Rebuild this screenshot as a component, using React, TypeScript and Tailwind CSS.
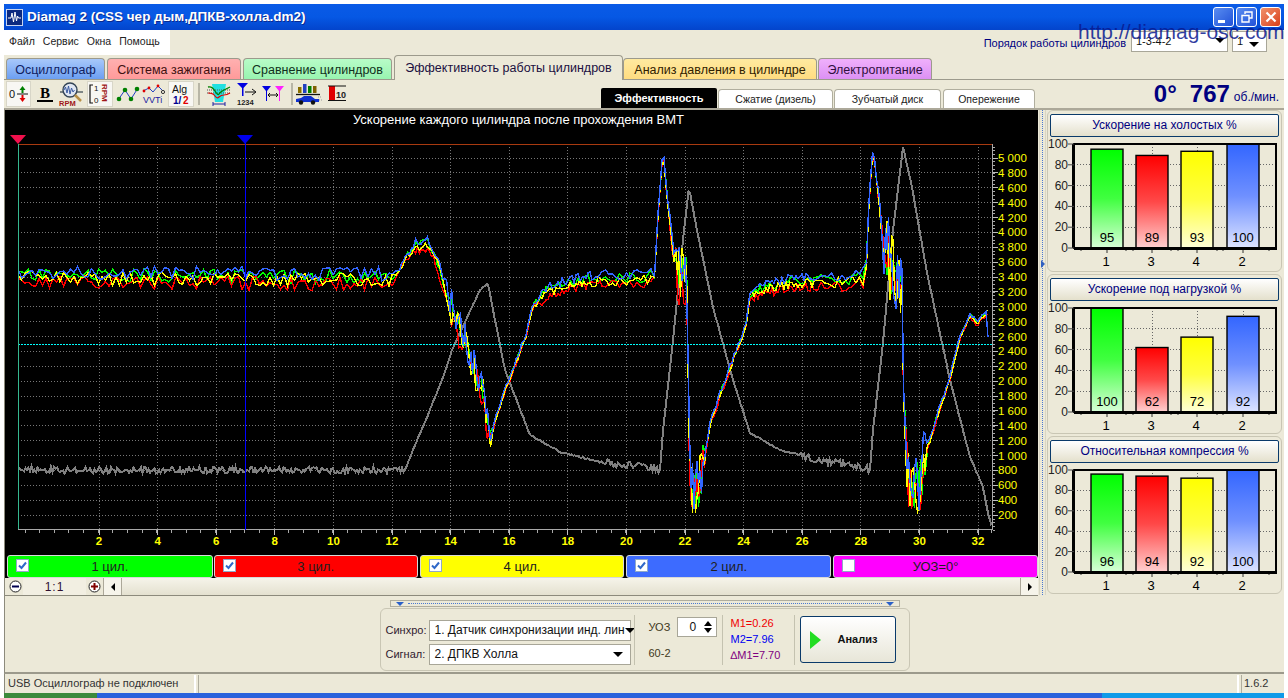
import React from "react";

type Pt = [number, number];

// hand-read control points of the waveform, in page pixels
const SIGNAL: Pt[] = [
  [18, 276], [395, 278], [405, 258], [415, 246], [428, 243], [436, 258], [446, 290], [456, 322], [466, 345],
  [476, 375], [484, 395], [490, 440], [494, 425], [503, 395], [515, 365], [526, 335], [532, 308], [545, 292],
  [570, 283], [600, 279], [640, 279], [655, 276], [658, 215], [663, 150], [668, 205], [674, 258], [680, 272],
  [687, 272], [688.5, 400], [690, 480], [696, 495], [702, 470], [710, 425], [720, 395], [732, 362], [746, 325],
  [750, 295], [765, 287], [800, 281], [850, 280], [866, 276], [869, 200], [873, 150], [878, 190], [884, 245],
  [893, 270], [902, 285], [904, 420], [908, 480], [918, 490], [925, 455], [937, 417], [950, 377], [960, 337],
  [970, 315], [977, 323], [982, 317], [987, 313],
];
const AMP: Pt[] = [
  [18, 7], [395, 7], [400, 3], [430, 4], [445, 6], [450, 16], [488, 16], [492, 2], [530, 2], [545, 4], [655, 6],
  [657, 2], [674, 4], [677, 30], [687, 30], [688.5, 1], [690, 26], [702, 26], [706, 3], [745, 3], [760, 4],
  [866, 6], [868, 2], [880, 4], [884, 38], [901, 38], [903, 1], [905, 30], [924, 30], [928, 3], [955, 2], [988, 1],
];
const GRAY: Pt[] = [
  [18, 470], [405, 470], [415, 445], [430, 410], [445, 372], [452, 350], [480, 290], [488, 283], [495, 320],
  [505, 370], [530, 435], [560, 452], [600, 462], [656, 468], [660, 470], [663, 430], [672, 350], [683, 240],
  [689, 187], [697, 230], [713, 307], [733, 380], [750, 433], [780, 450], [820, 460], [866, 468], [870, 470],
  [873, 430], [883, 343], [893, 230], [903, 147], [912, 187], [927, 273], [950, 380], [970, 457], [983, 487],
  [988, 513], [992, 527],
];

const interp = (pts: Pt[], x: number) => {
  for (let i = 1; i < pts.length; i++) {
    if (x <= pts[i][0]) {
      const [x0, y0] = pts[i - 1];
      const [x1, y1] = pts[i];
      return y0 + ((y1 - y0) * (x - x0)) / (x1 - x0);
    }
  }
  return pts[pts.length - 1][1];
};

const makeRng = (seed: number) => () => {
  seed = (seed * 1664525 + 1013904223) % 4294967296;
  return seed / 4294967296;
};

const trace = (seed: number, offset: number, tail: string) => {
  const rnd = makeRng(seed);
  const out: string[] = [];
  let x = 18;
  while (x < 987) {
    const a = interp(AMP, x);
    const y = interp(SIGNAL, x) + offset * (a > 3.5 ? 1 : 0.4) + (rnd() * 2 - 1) * a;
    out.push(`${x.toFixed(1)},${y.toFixed(1)}`);
    x += a > 10 ? 1.5 : a > 5 ? 3.5 : 2;
  }
  return out.join(" ") + " " + tail;
};

const grayTrace = () => {
  const rnd = makeRng(77);
  const out: string[] = [];
  for (let x = 18; x <= 992; x += 1.5) {
    const flat = x < 405 || (x > 600 && x < 660) || (x > 800 && x < 870);
    const y = interp(GRAY, x) + (rnd() * 2 - 1) * (flat ? 3.5 : 0.6);
    out.push(`${x},${y.toFixed(1)}`);
  }
  return out.join(" ");
};

const TRACES = [
  { color: "#00ff00", points: trace(11, -1, "987,314") },
  { color: "#ff0000", points: trace(23, 6, "987,314") },
  { color: "#ffff00", points: trace(37, 2, "987,310") },
  { color: "#3366ff", points: trace(51, -4, "988,337") },
];
const GRAY_POINTS = grayTrace();

const xLabels = Array.from({ length: 16 }, (_, i) => 2 + i * 2);
const yLabels = Array.from({ length: 25 }, (_, i) => 5000 - i * 200);
const xOf = (t: number) => 40.4 + 29.3 * t;
const yOf = (v: number) => 158 + ((5000 - v) / 200) * 14.88;
const fmt = (v: number) => (v >= 1000 ? `${Math.floor(v / 1000)} ${String(v % 1000).padStart(3, "0")}` : String(v));

function Scope() {
  const minorX = Array.from({ length: 67 }, (_, i) => 18 + 7 + i * 14.65);
  const minorY = Array.from({ length: 104 }, (_, i) => 147 + i * 3.72);
  return (
    <svg viewBox="5 132 1033 423" className="block w-[1033px] h-[423px]">
      {yLabels.map((v) => (
        <line key={v} x1={18} x2={992} y1={yOf(v)} y2={yOf(v)} stroke="#777" strokeDasharray="1 2" shapeRendering="crispEdges" />
      ))}
      {xLabels.map((t) => (
        <line key={t} x1={xOf(t)} x2={xOf(t)} y1={144} y2={529} stroke="#777" strokeDasharray="1 2" shapeRendering="crispEdges" />
      ))}
      <polyline points={GRAY_POINTS} fill="none" stroke="#808080" strokeWidth={2} shapeRendering="crispEdges" />
      {TRACES.map((t) => (
        <polyline key={t.color} points={t.points} fill="none" stroke={t.color} strokeWidth={1.4} shapeRendering="crispEdges" />
      ))}
      <line x1={18} x2={992} y1={344.5} y2={344.5} stroke="#00ffff" strokeDasharray="2 1" shapeRendering="crispEdges" />
      <line x1={18} x2={992} y1={144.5} y2={144.5} stroke="#a83a10" shapeRendering="crispEdges" />
      <line x1={18.5} x2={18.5} y1={144} y2={529} stroke="#35b890" shapeRendering="crispEdges" />
      <line x1={18} x2={992} y1={529.5} y2={529.5} stroke="#a8a8a8" shapeRendering="crispEdges" />
      <line x1={992.5} x2={992.5} y1={144} y2={530} stroke="#a8a8a8" shapeRendering="crispEdges" />
      <line x1={245} x2={245} y1={143} y2={530} stroke="#0000ff" strokeWidth={1} shapeRendering="crispEdges" />
      <polygon points="10,135 26,135 18,144" fill="#f0104c" />
      <polygon points="237,135 253,135 245,144" fill="#0000ee" />
      {minorX.map((x) => (
        <line key={x} x1={x} x2={x} y1={530} y2={533} stroke="#a8a8a8" shapeRendering="crispEdges" />
      ))}
      {minorY.map((y) => (
        <line key={y} x1={993} x2={995} y1={y} y2={y} stroke="#a8a8a8" shapeRendering="crispEdges" />
      ))}
      {xLabels.map((t) => (
        <g key={t}>
          <line x1={xOf(t)} x2={xOf(t)} y1={530} y2={535} stroke="#c0c0c0" shapeRendering="crispEdges" />
          <text x={xOf(t)} y={545} textAnchor="middle" fontSize={11.5} fontWeight={700} fill="#ffff00">
            {t}
          </text>
        </g>
      ))}
      {yLabels.map((v) => (
        <g key={v}>
          <line x1={993} x2={998} y1={yOf(v)} y2={yOf(v)} stroke="#c0c0c0" shapeRendering="crispEdges" />
          <text x={998} y={yOf(v) + 4} fontSize={11.5} fill="#ffff00">
            {fmt(v)}
          </text>
        </g>
      ))}
    </svg>
  );
}

const BAR_X = [43, 88, 133, 179];
const BAR_LABELS = ["1", "3", "4", "2"];
const BAR_FILL = ["url(#barGreen)", "url(#barRed)", "url(#barYellow)", "url(#barBlue)"];

function MiniChart({ values, plot }: { values: number[]; plot: number }) {
  const top = 7;
  const bottom = top + plot;
  const left = 26;
  const right = 228;
  const levels = [0, 20, 40, 60, 80, 100];
  return (
    <svg viewBox={`0 0 233 ${plot + 32}`} className="block w-[233px]" style={{ height: plot + 32 }}>
      <rect x={left} y={top} width={right - left} height={plot} fill="#ece9d8" />
      {levels.slice(1, 5).map((l) => {
        const y = bottom - (plot * l) / 100;
        return <line key={l} x1={left} x2={right} y1={y} y2={y} stroke="#666" strokeDasharray="1 2" shapeRendering="crispEdges" />;
      })}
      {[104, 149, 195].map((x) => (
        <line key={x} x1={x} x2={x} y1={top} y2={bottom} stroke="#666" strokeDasharray="1 2" shapeRendering="crispEdges" />
      ))}
      {values.map((v, i) => {
        const h = (plot * v) / 100;
        return (
          <g key={i}>
            <rect x={BAR_X[i]} y={bottom - h} width={32} height={h} fill={BAR_FILL[i]} stroke="#000" strokeWidth={1.4} />
            <text x={BAR_X[i] + 16} y={bottom - 6} textAnchor="middle" fontSize={13} fill="#000">
              {v}
            </text>
            <line x1={BAR_X[i] + 16} x2={BAR_X[i] + 16} y1={bottom} y2={bottom + 5} stroke="#333" />
            <line x1={BAR_X[i] - 10} x2={BAR_X[i] - 10} y1={bottom} y2={bottom + 3} stroke="#333" />
            <line x1={BAR_X[i] + 42} x2={BAR_X[i] + 42} y1={bottom} y2={bottom + 3} stroke="#333" />
            <text x={BAR_X[i] + 15} y={bottom + 18} textAnchor="middle" fontSize={13} fill="#000">
              {BAR_LABELS[i]}
            </text>
          </g>
        );
      })}
      <path d={`M${left} ${top}H${right}V${bottom}H${left}Z`} fill="none" stroke="#000" strokeWidth={2} />
      <line x1={left} x2={right + 1} y1={bottom + 0.5} y2={bottom + 0.5} stroke="#000" strokeWidth={3} />
      <line x1={left - 0.5} x2={left - 0.5} y1={top} y2={bottom} stroke="#000" strokeWidth={3} />
      {levels.map((l) => {
        const y = bottom - (plot * l) / 100;
        return (
          <g key={l}>
            <line x1={left - 6} x2={left} y1={y} y2={y} stroke="#444" />
            <text x={left - 6} y={y + 4} textAnchor="end" fontSize={12} fill="#222">
              {l}
            </text>
          </g>
        );
      })}
    </svg>
  );
}

function ChartPanel({ title, values, plot, heightClass }: { title: string; values: number[]; plot: number; heightClass: string }) {
  return (
    <div className={`${heightClass} rounded-md border border-[#c9c6b4] pt-[3px]`}>
      <div className="mx-[2px] h-[23px] rounded-[2px] border border-[#0a3a6a] bg-gradient-to-b from-white to-[#e4e0cc] text-center text-[12px] leading-[21px] text-[#000080]">
        {title}
      </div>
      <MiniChart values={values} plot={plot} />
    </div>
  );
}

function Tool({ on, w, children }: { on?: boolean; w: string; children: React.ReactNode }) {
  return (
    <div className={`${w} h-[26px] flex items-center justify-center ${on ? "bg-[#f8f7f3] border border-[#d8d6c8]" : ""}`}>{children}</div>
  );
}

const iconText = "font-['Liberation_Sans',sans-serif]";

function ToolIcons() {
  return (
    <div className="flex w-[597px] pl-[2px] items-center h-[28px]">
      <Tool on w="w-[25px] mr-[1px]">
        <svg width="22" height="22" viewBox="0 0 22 22">
          <text x="1" y="15" fontSize="11" fill="#111" className={iconText}>0</text>
          <path d="M9 11H20" stroke="#111" />
          <path d="M14.5 3l3 4h-2v3h-2V7h-2z" fill="#008000" />
          <path d="M14.5 19l3-4h-2v-3h-2v3h-2z" fill="#e00000" />
        </svg>
      </Tool>
      <Tool w="w-[26px]">
        <svg width="22" height="22" viewBox="0 0 22 22">
          <text x="11" y="15" textAnchor="middle" fontSize="15" fontWeight="700" fill="#000" className="font-['Liberation_Serif',serif]">B</text>
          <path d="M3 18H19" stroke="#000" strokeWidth="2" />
        </svg>
      </Tool>
      <Tool w="w-[28px] mr-[1px]">
        <svg width="26" height="26" viewBox="0 0 26 26">
          <path d="M1 11H24" stroke="#123" />
          <circle cx="11" cy="9" r="7" fill="#dfe6f2" stroke="#345" strokeWidth="1.4" />
          <path d="M5 9l1.5-3 1.5 6 1.5-7 1.5 8 1.5-6 1.5 4 1.5-2" fill="none" stroke="#3a5aa0" />
          <path d="M16 14l6 6" stroke="#b89048" strokeWidth="2.5" />
          <text x="0" y="25" fontSize="7.5" fontWeight="700" fill="#a01818" className={iconText}>RPM</text>
        </svg>
      </Tool>
      <Tool on w="w-[26px] mr-[1px]">
        <svg width="24" height="24" viewBox="0 0 24 24">
          <path d="M5 3H2V21H5" fill="none" stroke="#111" strokeWidth="1.2" />
          <text x="6" y="9" fontSize="8" fill="#111" className={iconText}>1</text>
          <text x="6" y="21" fontSize="8" fill="#111" className={iconText}>0</text>
          <text x="-22" y="20" fontSize="7.5" fontWeight="700" fill="#a01818" transform="rotate(-90) scale(1 1)" className={iconText}>
          </text>
          <text transform="translate(14 2) rotate(90)" fontSize="8" fontWeight="700" fill="#a01818" className={iconText}>RPM</text>
        </svg>
      </Tool>
      <Tool w="w-[27px]">
        <svg width="24" height="24" viewBox="0 0 24 24">
          <path d="M2 18L9 8L15 17L22 6" fill="none" stroke="#2040c0" />
          <circle cx="3" cy="17" r="2.3" fill="#008000" />
          <circle cx="9" cy="8" r="2.3" fill="#008000" />
          <circle cx="15" cy="17" r="2.3" fill="#008000" />
          <circle cx="21" cy="7" r="2.3" fill="#008000" />
        </svg>
      </Tool>
      <Tool w="w-[26px] mr-[1px]">
        <svg width="24" height="24" viewBox="0 0 24 24">
          <path d="M1 9L7 6L11 10L16 4L21 9" fill="none" stroke="#2040c0" />
          <circle cx="2" cy="9" r="1.4" fill="#e00000" />
          <circle cx="7" cy="6" r="1.4" fill="#e00000" />
          <circle cx="16" cy="4" r="1.4" fill="#e00000" />
          <circle cx="21" cy="10" r="1.6" fill="none" stroke="#333" />
          <text x="1" y="21" fontSize="9" fill="#2020a0" className={iconText}>VVTi</text>
        </svg>
      </Tool>
      <Tool on w="w-[26px]">
        <svg width="22" height="24" viewBox="0 0 22 24">
          <text x="2" y="11" fontSize="10.5" fill="#111" className={iconText}>Alg</text>
          <text x="3" y="22" fontSize="10" fontWeight="700" fill="#000090" className={iconText}>1/</text>
          <text x="13" y="22" fontSize="10" fontWeight="700" fill="#e00000" className={iconText}>2</text>
        </svg>
      </Tool>
      <div className="mx-[4px] h-[22px] w-[2px] bg-[#b8b6a6]" />
      <Tool w="w-[28px] ml-[1px]">
        <svg width="26" height="24" viewBox="0 0 26 24">
          <path d="M6 2H20L17 20H9Z" fill="#20e0e0" />
          <path d="M1 8H25M1 11H25" stroke="#555" strokeDasharray="1 1" />
          <path d="M2 5Q6 4 9 9T13 12T18 8T24 5" fill="none" stroke="#008000" strokeWidth="1.3" />
          <path d="M2 11Q7 11 9 14T13 15T18 13T24 11" fill="none" stroke="#e00000" strokeWidth="1.2" />
          <path d="M7 22H19M7 20v4M19 20v4" stroke="#2020a0" />
        </svg>
      </Tool>
      <Tool w="w-[27px]">
        <svg width="26" height="24" viewBox="0 0 26 24">
          <path d="M3 1H14L9.5 6V14H8V6Z" fill="#0000e0" />
          <path d="M11 10H21M18 7l4 3-4 3" fill="none" stroke="#111" />
          <text x="3" y="23" fontSize="7.5" fontWeight="700" fill="#222" className={iconText}>1234</text>
        </svg>
      </Tool>
      <Tool w="w-[25px] mr-[6px]">
        <svg width="24" height="22" viewBox="0 0 24 22">
          <path d="M1 3H10L6 8V18H5V8Z" fill="#0000e0" />
          <path d="M14 3H23L19 8V18H18V8Z" fill="#ff20ff" />
          <path d="M8 12H16M9 10l-2 2 2 2M15 10l2 2-2 2" fill="none" stroke="#111" />
        </svg>
      </Tool>
      <div className="h-[22px] w-[2px] bg-[#b8b6a6]" />
      <Tool w="w-[29px] ml-[1px]">
        <svg width="27" height="24" viewBox="0 0 27 24">
          <rect x="3" y="5" width="3.5" height="6" fill="#8a7000" />
          <rect x="8" y="2" width="3.5" height="9" fill="#2040c0" />
          <rect x="13" y="4" width="3.5" height="7" fill="#008000" />
          <rect x="18" y="4" width="3.5" height="7" fill="#806000" />
          <path d="M1 12.5H25" stroke="#111" strokeWidth="1.3" />
          <path d="M1 20V17L6 16L9 14H16L20 17H24V20Z" fill="#1030d0" />
          <circle cx="6" cy="20.5" r="2.2" fill="#111" />
          <circle cx="18" cy="20.5" r="2.2" fill="#111" />
          <path d="M23 15H27M24 18H27" stroke="#999" strokeDasharray="1 1" />
        </svg>
      </Tool>
      <Tool w="w-[27px]">
        <svg width="22" height="22" viewBox="0 0 22 22">
          <rect x="3" y="3" width="6" height="14" fill="#e00000" />
          <path d="M2 17.5H20M2 3H20" stroke="#111" />
          <text x="10" y="15" fontSize="9" fontWeight="700" fill="#222" className={iconText}>10</text>
        </svg>
      </Tool>
    </div>
  );
}

function Arrow({ className = "" }: { className?: string }) {
  return <div className={`h-0 w-0 border-x-[5px] border-t-[5px] border-x-transparent border-t-black ${className}`} />;
}

function LegendBtn({ label, bg, checked, width }: { label: string; bg: string; checked: boolean; width: string }) {
  return (
    <div className={`${bg} ${width} h-[23px] relative rounded-[3px] border border-[#d8d8d8] text-center text-[13px] leading-[21px] text-[#202020]`}>
      <div className="absolute left-[8px] top-[3px] flex h-[13px] w-[13px] items-center justify-center border border-[#8fa8c8] bg-white">
        {checked && (
          <svg width="9" height="9" viewBox="0 0 9 9">
            <path d="M1 4.5L3.5 7L8 1.5" fill="none" stroke="#3068c8" strokeWidth="2" />
          </svg>
        )}
      </div>
      {label}
    </div>
  );
}

function Combo({ text, width, textClass = "" }: { text: string; width: string; textClass?: string }) {
  return (
    <div className={`${width} flex h-[21px] items-center justify-between border border-[#a8a698] bg-white pl-[5px] pr-[7px] text-[12px] text-[#111] ${textClass}`}>
      <span className="whitespace-nowrap">{text}</span>
      <Arrow />
    </div>
  );
}

function Sep() {
  return <div className="h-[50px] w-px bg-[#c4c2b0]" />;
}

export default function App() {
  return (
    <div className="relative flex h-[698px] w-[1288px] flex-col overflow-hidden bg-white px-1 pt-1 font-['Liberation_Sans',Arial,sans-serif]">
      <svg width="0" height="0" className="absolute">
        <defs>
          <linearGradient id="barGreen" x1="0" y1="0" x2="0" y2="1"><stop offset="0" stopColor="#00ff00" /><stop offset="0.5" stopColor="#40ff40" /><stop offset="1" stopColor="#d8ffd8" /></linearGradient>
          <linearGradient id="barRed" x1="0" y1="0" x2="0" y2="1"><stop offset="0" stopColor="#ff0000" /><stop offset="0.5" stopColor="#ff4848" /><stop offset="1" stopColor="#ffd0d0" /></linearGradient>
          <linearGradient id="barYellow" x1="0" y1="0" x2="0" y2="1"><stop offset="0" stopColor="#ffff00" /><stop offset="0.5" stopColor="#ffff40" /><stop offset="1" stopColor="#ffffd8" /></linearGradient>
          <linearGradient id="barBlue" x1="0" y1="0" x2="0" y2="1"><stop offset="0" stopColor="#3366ff" /><stop offset="0.5" stopColor="#6f90ff" /><stop offset="1" stopColor="#dde4ff" /></linearGradient>
        </defs>
      </svg>

      {/* title bar */}
      <div className="flex h-[26px] shrink-0 items-center bg-gradient-to-b from-[#0a5ae6] via-[#0658e4] to-[#0344cc] pl-[2px] pr-[3px]">
        <svg width="17" height="17" viewBox="0 0 17 17" className="mr-[4px]">
          <rect x="0.5" y="0.5" width="16" height="16" fill="#0c2a80" stroke="#c8d4f0" />
          <path d="M2 9H5L6 4L7.5 13L9 3L10.5 12L11.5 7L12.5 9H15" fill="none" stroke="#fff" />
        </svg>
        <span className="text-[13.5px] font-bold text-white [text-shadow:1px_1px_0_#0a2a90]">Diamag 2 (CSS чер дым,ДПКВ-холла.dm2)</span>
        <div className="ml-auto flex gap-[2px]">
          <div className="flex h-[20px] w-[21px] items-end rounded-[3px] border border-white bg-gradient-to-br from-[#5a8cf0] to-[#2250d8] px-[4px] pb-[3px]">
            <div className="h-[3px] w-[7px] bg-white" />
          </div>
          <div className="flex h-[20px] w-[21px] items-center justify-center rounded-[3px] border border-white bg-gradient-to-br from-[#5a8cf0] to-[#2250d8]">
            <svg width="12" height="12" viewBox="0 0 12 12">
              <path d="M4 3V1H11V7H8M1 4.5H8V11H1Z" fill="none" stroke="#fff" strokeWidth="1.4" />
            </svg>
          </div>
          <div className="ml-[1px] flex h-[20px] w-[21px] items-center justify-center rounded-[3px] border border-white bg-gradient-to-br from-[#f0906a] to-[#d83c14]">
            <svg width="12" height="12" viewBox="0 0 12 12">
              <path d="M1.5 1.5L10.5 10.5M10.5 1.5L1.5 10.5" stroke="#fff" strokeWidth="2.2" />
            </svg>
          </div>
        </div>
      </div>

      {/* menu and firing order */}
      <div className="flex h-[25px] shrink-0 bg-[#ece9d8]">
        <div className="flex w-[166px] items-center gap-[8px] bg-white pl-[5px] pb-[1px] text-[10.5px] text-[#222]">
          <span>Файл</span>
          <span>Сервис</span>
          <span>Окна</span>
          <span>Помощь</span>
        </div>
        <div className="ml-auto flex items-start pr-[17px] pt-[1px]">
          <span className="mr-[5px] mt-[4px] text-[11px] text-[#000080]">Порядок работы цилиндров</span>
          <div className="mr-[4px] flex h-[21px] w-[97px] items-center justify-between border border-[#a8a698] bg-white pl-[4px] pr-[2px] text-[11px] text-[#111]">
            1-3-4-2
            <Arrow className="mb-[3px]" />
          </div>
          <div className="flex h-[21px] w-[35px] items-center justify-between border border-[#a8a698] bg-white pl-[4px] pr-[7px] text-[11px] text-[#111]">
            1
            <Arrow className="mt-[6px]" />
          </div>
        </div>
      </div>

      {/* tabs */}
      <div className="flex h-[25px] shrink-0 items-end border-b border-[#9c9a8c] bg-[#ece9d8] pl-[2px] text-[12.5px]">
        <div className="mr-[2px] h-[21px] w-[99px] rounded-t-[4px] border border-b-0 border-[#9c9a8c] bg-gradient-to-b from-[#a8c8fa] to-[#6c9ff2] text-center leading-[22px] text-[#102060]">Осциллограф</div>
        <div className="mr-[2px] h-[21px] w-[134px] rounded-t-[4px] border border-b-0 border-[#9c9a8c] bg-gradient-to-b from-[#ffb0b0] to-[#ff9a9a] text-center leading-[22px] text-[#401010]">Система зажигания</div>
        <div className="mr-[2px] h-[21px] w-[149px] rounded-t-[4px] border border-b-0 border-[#9c9a8c] bg-gradient-to-b from-[#b8fcc8] to-[#98f4b0] text-center leading-[22px] text-[#103020]">Сравнение цилиндров</div>
        <div className="-mb-px h-[25px] w-[229px] rounded-t-[4px] border border-b-0 border-[#9c9a8c] bg-[#ece9d8] text-center leading-[24px] text-[#201040]">Эффективность работы цилиндров</div>
        <div className="mr-px h-[21px] w-[194px] rounded-t-[4px] border border-b-0 border-[#9c9a8c] bg-gradient-to-b from-[#ffeaa0] to-[#ffdc80] text-center leading-[22px] text-[#302000]">Анализ давления в цилиндре</div>
        <div className="h-[21px] w-[114px] rounded-t-[4px] border border-b-0 border-[#9c9a8c] bg-gradient-to-b from-[#f0b0fc] to-[#dc90f4] text-center leading-[22px] text-[#301040]">Электропитание</div>
      </div>

      {/* toolbar, sub tabs, rpm */}
      <div className="flex h-[28px] shrink-0 items-end bg-[#ece9d8]">
        <ToolIcons />
        <div className="flex h-[20px] items-end text-[10.5px]">
          <div className="h-[20px] w-[116px] rounded-t-[2px] bg-black text-center text-[11px] font-bold leading-[20px] text-white">Эффективность</div>
          <div className="ml-px h-[19px] w-[115px] rounded-t-[4px] border border-b-0 border-[#b0ae9e] bg-white text-center leading-[19px] text-[#222]">Сжатие (дизель)</div>
          <div className="ml-px h-[19px] w-[107px] rounded-t-[4px] border border-b-0 border-[#b0ae9e] bg-white text-center leading-[19px] text-[#222]">Зубчатый диск</div>
          <div className="ml-[2px] h-[19px] w-[92px] rounded-t-[4px] border border-b-0 border-[#b0ae9e] bg-white text-center leading-[19px] text-[#222]">Опережение</div>
        </div>
        <div className="flex h-[28px] flex-1 items-center justify-end pr-[5px] text-[#000080]">
          <span className="text-[24px] font-bold leading-none">0°</span>
          <span className="ml-[13px] text-[24px] font-bold leading-none">767</span>
          <span className="ml-[4px] mt-[5px] text-[12px]">об./мин.</span>
        </div>
      </div>

      {/* scope and bar charts */}
      <div className="flex h-[488px] shrink-0 border-l border-[#8c8a7c] border-t-2 border-t-[#aca899] bg-[#ece9d8]">
        <div className="w-[1033px]">
          <div className="h-[468px] bg-black">
            <div className="h-[22px] pr-[6px] text-center text-[13px] leading-[20px] text-white">Ускорение каждого цилиндра после прохождения ВМТ</div>
            <Scope />
            <div className="flex gap-[1px] pl-[2px]">
              <LegendBtn label="1 цил." bg="bg-[#00ff00]" checked width="w-[206px]" />
              <LegendBtn label="3 цил." bg="bg-[#ff0000]" checked width="w-[204px] mr-px" />
              <LegendBtn label="4 цил." bg="bg-[#ffff00]" checked width="w-[205px] mr-px" />
              <LegendBtn label="2 цил." bg="bg-[#3d6bff]" checked width="w-[205px] mr-px" />
              <LegendBtn label="УОЗ=0°" bg="bg-[#ff00ff]" checked={false} width="w-[205px]" />
            </div>
          </div>
          <div className="flex h-[18px] items-stretch border-b border-[#8c8a7c] pl-[2px] text-[12px]">
            <div className="flex w-[16px] items-center justify-center">
              <svg width="13" height="13" viewBox="0 0 13 13">
                <circle cx="6.5" cy="6.5" r="5.5" fill="#fff" stroke="#222" />
                <path d="M3 6.5H10" stroke="#000050" strokeWidth="2" />
              </svg>
            </div>
            <div className="w-[63px] bg-[#f2efe2] text-center leading-[19px] tracking-[1px] text-[#301030]">1:1</div>
            <div className="flex w-[17px] items-center justify-center">
              <svg width="13" height="13" viewBox="0 0 13 13">
                <circle cx="6.5" cy="6.5" r="5.5" fill="#fff" stroke="#222" />
                <path d="M3 6.5H10M6.5 3V10" stroke="#800000" strokeWidth="2" />
              </svg>
            </div>
            <div className="flex w-[19px] items-center justify-center border-x border-[#aca899] bg-[#f6f4ea]">
              <div className="h-0 w-0 border-y-[4px] border-r-[4px] border-y-transparent border-r-black" />
            </div>
            <div className="flex-1 bg-gradient-to-b from-[#f6f4ea] to-[#e4e1d0]" />
            <div className="flex w-[18px] items-center justify-center border-l border-[#aca899] bg-[#f6f4ea]">
              <div className="h-0 w-0 border-y-[4px] border-l-[4px] border-y-transparent border-l-black" />
            </div>
          </div>
        </div>
        <div className="relative ml-[1px] w-[7px] h-[485px] border-x border-[#d8d5c4]">
          <div className="absolute left-[2px] top-0 bottom-0 border-l border-dotted border-[#4a78d0]" />
          <div className="absolute left-[1px] top-[150px] h-0 w-0 border-y-[4px] border-l-[4px] border-y-transparent border-l-[#3060c0]" />
        </div>
        <div className="ml-[1px] flex w-[235px] flex-col gap-[2px]">
          <ChartPanel title="Ускорение на холостых %" values={[95, 89, 93, 100]} plot={104} heightClass="h-[162px]" />
          <ChartPanel title="Ускорение под нагрузкой %" values={[100, 62, 72, 92]} plot={104} heightClass="h-[160px]" />
          <ChartPanel title="Относительная компрессия %" values={[96, 94, 92, 100]} plot={102} heightClass="h-[158px]" />
        </div>
      </div>

      {/* analysis controls */}
      <div className="flex h-[78px] shrink-0 flex-col items-center border-l border-[#8c8a7c] border-b-2 border-b-[#9c9a8c] bg-[#ece9d8] pt-[4px]">
        <div className="flex h-[7px] w-[510px] items-center justify-between border border-[#b0ae9e] px-[5px]">
          <div className="h-0 w-0 border-x-[4px] border-t-[4px] border-x-transparent border-t-[#2a60c8]" />
          <div className="mx-[4px] flex-1 border-t border-dotted border-[#4a78d0]" />
          <div className="h-0 w-0 border-x-[4px] border-t-[4px] border-x-transparent border-t-[#2a60c8]" />
        </div>
        <div className="mt-[1px] flex h-[63px] w-[530px] items-center rounded-md border border-[#c9c6b4] pl-[5px]">
          <div className="flex w-[248px] flex-col gap-[3px] pt-[5px] text-[11px] text-[#302030]">
            <div className="flex items-center">
              <span className="w-[43px]">Синхро:</span>
              <Combo text="1.  Датчик синхронизации инд. лин" width="w-[202px]" />
            </div>
            <div className="flex items-center">
              <span className="w-[43px]">Сигнал:</span>
              <Combo text="2.  ДПКВ Холла" width="w-[202px]" />
            </div>
          </div>
          <Sep />
          <div className="flex w-[87px] flex-col pl-[14px] text-[11px] text-[#403820]">
            <div className="flex items-center">
              <span className="w-[28px]">УОЗ</span>
              <div className="flex h-[20px] w-[40px] items-center justify-between border border-[#a8a698] bg-white pl-[12px] pr-[4px] text-[12px] text-[#111]">
                0
                <div className="flex flex-col gap-[2px]">
                  <div className="h-0 w-0 border-x-[4px] border-b-[5px] border-x-transparent border-b-black" />
                  <div className="h-0 w-0 border-x-[4px] border-t-[5px] border-x-transparent border-t-black" />
                </div>
              </div>
            </div>
            <span className="mt-[8px]">60-2</span>
          </div>
          <Sep />
          <div className="flex w-[71px] flex-col gap-[3px] pl-[8px] text-[11px] leading-[13px]">
            <span className="text-[#f00000]">M1=0.26</span>
            <span className="text-[#0000f0]">M2=7.96</span>
            <span className="text-[#800080]">∆M1=7.70</span>
          </div>
          <Sep />
          <div className="ml-[5px] flex h-[47px] w-[96px] items-center rounded-[3px] border border-[#0a3a6a] bg-gradient-to-b from-white to-[#e8e6d8] pl-[9px]">
            <div className="h-0 w-0 border-y-[9px] border-l-[11px] border-y-transparent border-l-[#22dd22]" />
            <span className="ml-[17px] text-[11px] font-bold text-[#111]">Анализ</span>
          </div>
        </div>
      </div>

      {/* status bar */}
      <div className="flex h-[19px] shrink-0 border-l border-[#8c8a7c] bg-[#ece9d8] pt-[1px] text-[11px] text-[#333]">
        <div className="w-[191px] border-r-2 border-white pl-[3px] leading-[17px]">USB Осциллограф не подключен</div>
        <div className="ml-[2px] w-[1041px] border-l border-r-2 border-l-[#b0ae9e] border-r-white" />
        <div className="ml-[2px] flex-1 border-l border-[#b0ae9e] pl-[2px] leading-[17px]">1.6.2</div>
      </div>

      {/* taskbar sliver */}
      <div className="flex h-[5px] shrink-0 bg-[#2a62dc]">
        <div className="w-[93px] bg-[#3c8a3c]" />
        <div className="ml-auto w-[182px] bg-[#0f9ae8]" />
      </div>

      {/* site watermark over the title bar */}
      <div className="absolute left-[1078px] top-[20px] text-[21px] leading-[24px] text-[#0a1a90]/85">http://diamag-osc.com</div>
    </div>
  );
}
